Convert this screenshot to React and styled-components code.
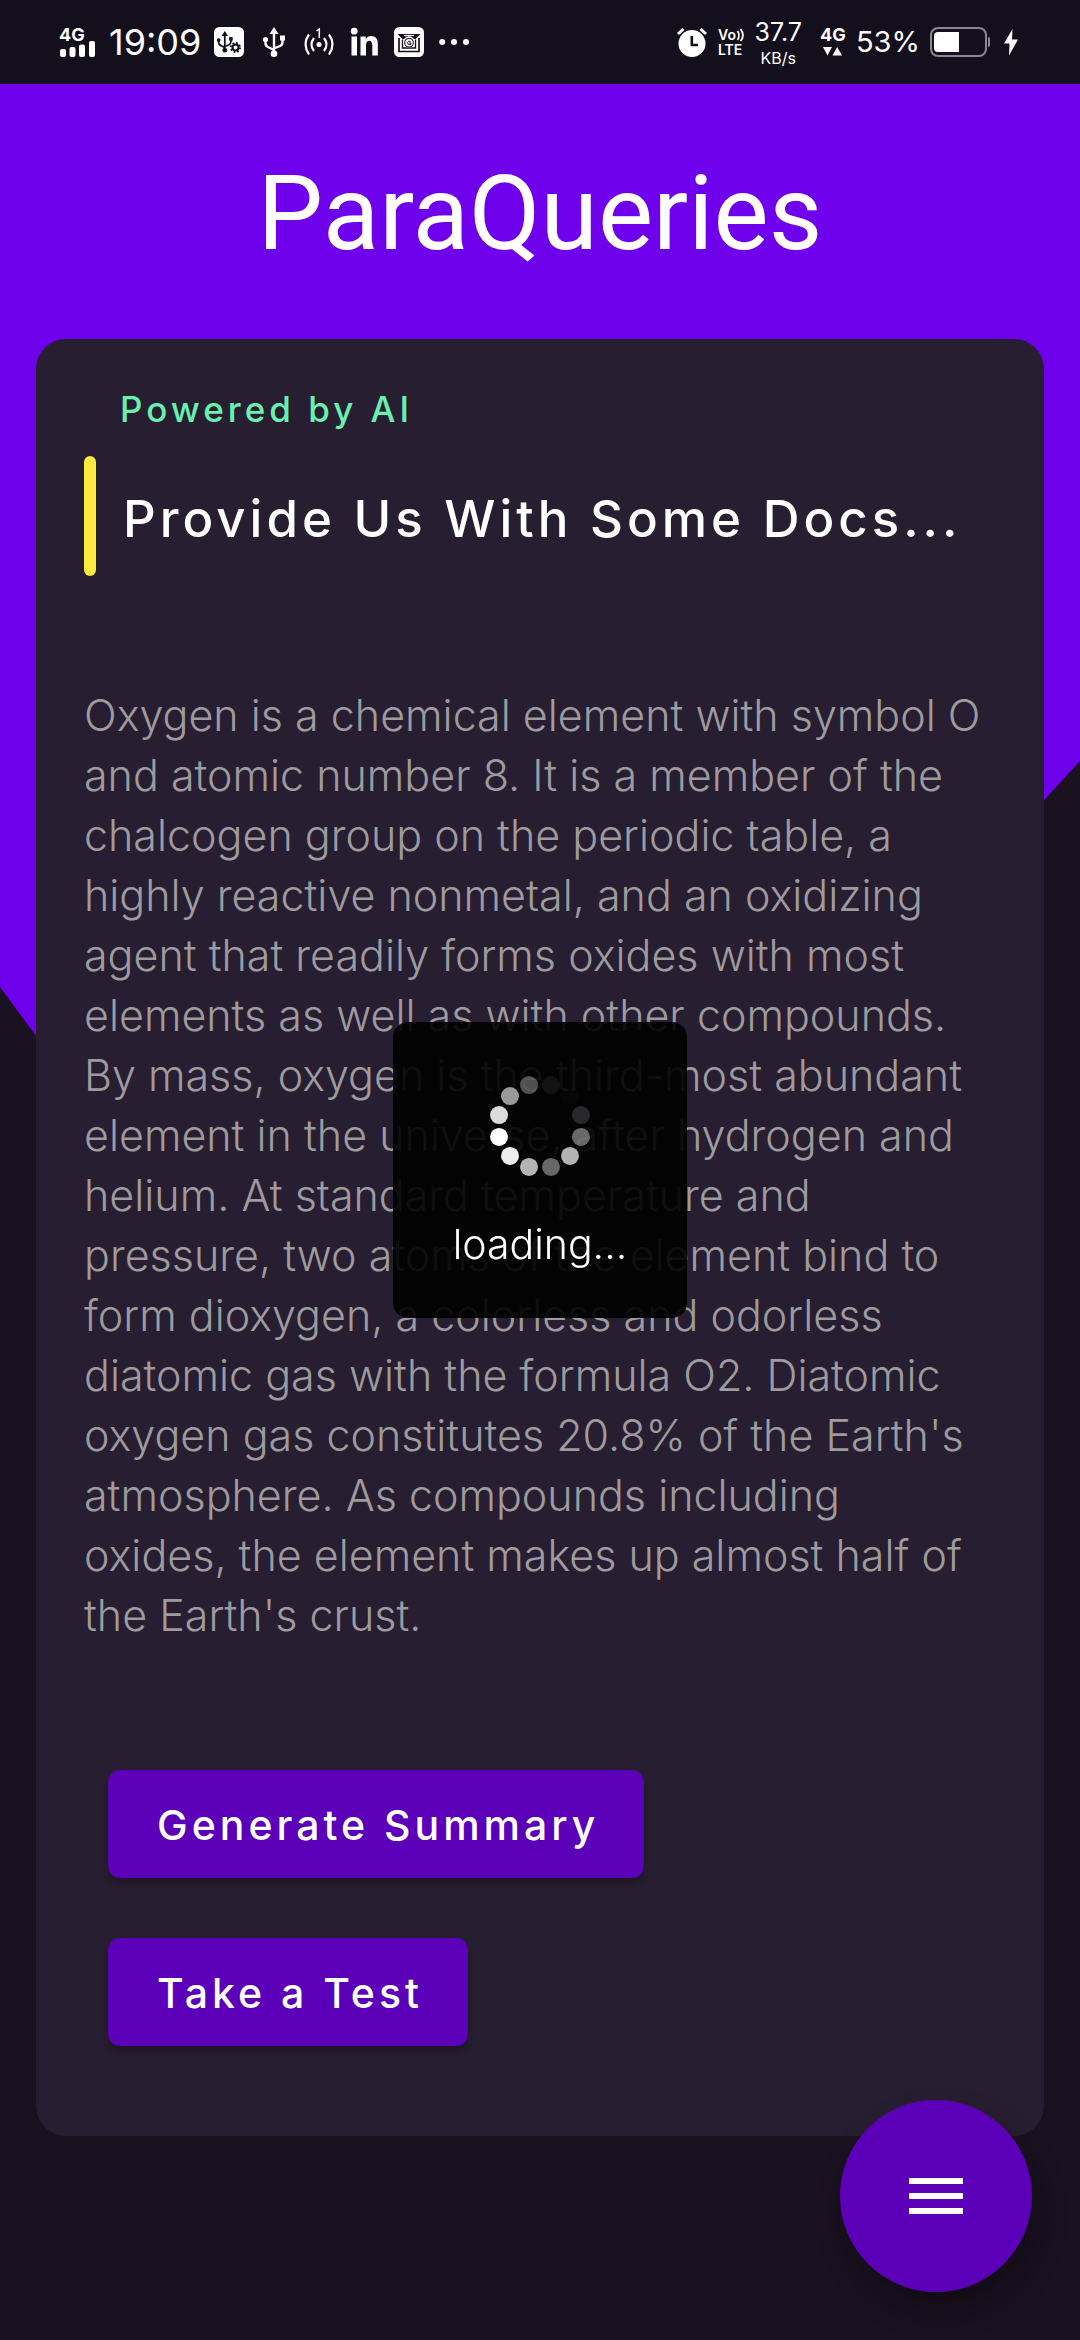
import React from "react";
import styled, { createGlobalStyle } from "styled-components";

const GlobalStyle = createGlobalStyle`
  *, *::before, *::after { box-sizing: border-box; }
  body {
    margin: 0;
    background: #1a1121;
    color: #fff;
    font-family: Inter, "Open Sans", "Liberation Sans", sans-serif;
  }
`;

const Screen = styled.div`
  position: relative;
  isolation: isolate;
  display: flex;
  flex-direction: column;
  min-height: 100vh;
`;

const Backdrop = styled.div`
  position: absolute;
  z-index: -1;
  top: 84px;
  left: 0;
  right: 0;
  height: 1431px;
  background: #6e00eb;
  clip-path: polygon(0 0, 100% 0, 100% 677px, 36% 100%, 0 903px);
`;

const StatusBar = styled.header`
  display: flex;
  justify-content: space-between;
  align-items: center;
  height: 84px;
  padding: 0 60px;
  background: #140f1c;
`;

const StatusGroup = styled.div`
  display: flex;
  align-items: center;
  gap: ${(p) => p.$gap}px;

  svg { display: block; flex: none; overflow: visible; }
`;

const Clock = styled.time`
  font-size: 36px;
  line-height: 40px;
`;

const Speed = styled.div`
  display: flex;
  flex-direction: column;
  align-items: center;
  gap: 4px;
  font-size: 25px;
  line-height: 28px;
  margin-right: 8px;

  small { font-size: 16px; line-height: 16px; }
`;

const Percent = styled.span`
  font-size: 29px;
  line-height: 40px;
`;

const AppTitle = styled.h1`
  margin: 0;
  padding: 70px 0 65px;
  font-family: Roboto, Inter, sans-serif;
  font-size: 104px;
  line-height: 120px;
  font-weight: 400;
  text-align: center;
`;

const Card = styled.main`
  display: flex;
  flex-direction: column;
  margin: 0 36px 204px;
  padding: 48px 48px 90px;
  border-radius: 30px;
  background: #271e31;
`;

const Tagline = styled.p`
  margin: 0;
  padding-left: 36px;
  color: #69f0ae;
  font-size: 35px;
  line-height: 45px;
  font-weight: 500;
  letter-spacing: 4px;
`;

const Heading = styled.label`
  display: flex;
  align-items: flex-start;
  gap: 27px;
  height: 120px;
  margin-top: 24px;
  font-size: 51px;
  line-height: 126px;
  font-weight: 500;
  letter-spacing: 4px;
  white-space: nowrap;

  &::before {
    content: "";
    width: 12px;
    height: 120px;
    border-radius: 6px;
    background: #ffeb3b;
  }
`;

const DocInput = styled.textarea`
  display: block;
  width: 100%;
  height: 960px;
  margin: 109px 0 125px;
  padding: 0 8px 0 0;
  border: 0;
  outline: 0;
  resize: none;
  overflow: hidden;
  background: transparent;
  color: #9e9b9e;
  font: 300 43px/60px Inter, "Open Sans", "Liberation Sans", sans-serif;
`;

const Actions = styled.div`
  display: flex;
  flex-direction: column;
  align-items: flex-start;
  gap: 60px;
  padding-left: 24px;
`;

const ActionButton = styled.button`
  height: 108px;
  padding: 2px 45px 0 49px;
  border: 0;
  border-radius: 12px;
  background: #5b00b8;
  color: #fff;
  box-shadow: 0 4px 6px rgba(0, 0, 0, 0.3);
  font: 500 41px/48px Inter, "Open Sans", "Liberation Sans", sans-serif;
  letter-spacing: 4px;
`;

const MenuButton = styled.button`
  position: fixed;
  right: 48px;
  bottom: 48px;
  display: flex;
  align-items: center;
  justify-content: center;
  width: 192px;
  height: 192px;
  padding: 0;
  border: 0;
  border-radius: 50%;
  background: #5b00b8;
  color: #fff;
  box-shadow: 6px 18px 30px rgba(0, 0, 0, 0.3);
`;

const Loader = styled.div`
  position: fixed;
  top: 50%;
  left: 50%;
  transform: translate(-50%, -50%);
  display: flex;
  flex-direction: column;
  align-items: center;
  gap: 43px;
  width: 294px;
  height: 296px;
  padding-top: 53px;
  border-radius: 15px;
  background: rgba(0, 0, 0, 0.9);
  font-size: 41px;
  line-height: 48px;
  font-weight: 300;
`;

const SignalIcon = () => (
  <svg width="36" height="30" viewBox="0 0 36 30" fill="#fff">
    <text x="-1" y="14" fontSize="18" fontWeight="700">4G</text>
    <rect x="0" y="22" width="6" height="8" rx="2" />
    <rect x="9.500" y="20" width="6" height="10" rx="2" />
    <rect x="19" y="17.500" width="6" height="12.500" rx="2" />
    <rect x="29" y="14" width="6" height="16" rx="2" />
  </svg>
);

const Trident = ({ color }) => (
  <g fill="none" stroke={color} strokeWidth="2.400">
    <path d="M15 4V26" />
    <path d="M6.500 13V16Q6.500 19 9 20L15 23" />
    <path d="M23.500 12V15Q23.500 18 21 19L15 21.500" />
    <path d="M15 0L19.500 7H10.500Z" fill={color} stroke="none" />
    <circle cx="6.500" cy="12.500" r="2.600" fill={color} stroke="none" />
    <rect x="21" y="8.500" width="5" height="5" fill={color} stroke="none" />
    <circle cx="15" cy="26.700" r="3.300" fill={color} stroke="none" />
  </g>
);

const UsbSettingsIcon = () => (
  <svg width="30" height="30" viewBox="0 0 30 30">
    <rect width="30" height="30" rx="5.500" fill="#fff" />
    <g transform="translate(0 4) scale(.72)">
      <Trident color="#140f1c" />
    </g>
    <circle cx="21.500" cy="20.500" r="5.600" fill="#fff" />
    <circle cx="21.500" cy="20.500" r="3" fill="none" stroke="#140f1c" strokeWidth="2" />
    <circle cx="21.500" cy="20.500" r="4.600" fill="none" stroke="#140f1c" strokeWidth="1.800" strokeDasharray="1.800 1.812" />
  </svg>
);

const UsbIcon = () => (
  <svg width="30" height="30" viewBox="0 0 30 30">
    <Trident color="#fff" />
  </svg>
);

const HotspotIcon = () => (
  <svg width="30" height="30" viewBox="0 0 30 30" fill="none" stroke="#fff" strokeWidth="2.200">
    <path d="M5 7.500Q-2 17 5 27.500M10 11Q5 17.500 10 24M25 7.500Q32 17 25 27.500M20 11Q25 17.500 20 24" />
    <circle cx="15" cy="17.500" r="2.500" fill="#fff" stroke="none" />
    <path d="M12.500 4L15.300 2V11" strokeWidth="1.500" />
  </svg>
);

const LinkedInIcon = () => (
  <svg width="30" height="30" viewBox="0 0 30 30" fill="#fff">
    <circle cx="5.200" cy="4.200" r="3.400" />
    <path d="M2.500 9.500H8V28.500H2.500ZM11.500 9.500H16.700V12Q18.500 9 22.300 9Q28.800 9 28.800 17V28.500H23.300V18.500Q23.300 13.700 20.300 13.700Q17 13.700 17 18.500V28.500H11.500Z" />
  </svg>
);

const MailAppIcon = () => (
  <svg width="30" height="30" viewBox="0 0 30 30" fill="none" stroke="#140f1c" strokeWidth="1.700">
    <rect width="30" height="30" rx="5.500" fill="#fff" stroke="none" />
    <path d="M5 11V24.500H25V11" />
    <path d="M3.500 7H26.500L21.500 12H8.500Z" fill="#140f1c" stroke="none" />
    <path d="M8.500 12.500V21H21.500V12.500" strokeWidth="1.400" />
    <circle cx="15" cy="15" r="5.800" fill="#fff" stroke="none" />
    <path d="M10 8.500H20" stroke="#fff" strokeWidth="1.200" />
    <circle cx="15" cy="15.800" r="4.300" strokeWidth="1.100" />
    <path d="M16.600 14.600Q14.500 13.200 13.400 15.500Q13.400 18.300 16.800 17.300V15.900H15.200" strokeWidth="1" />
  </svg>
);

const MoreIcon = () => (
  <svg width="30" height="30" viewBox="0 0 30 30" fill="#fff">
    <circle cx="3.200" cy="15" r="3" />
    <circle cx="15" cy="15" r="3" />
    <circle cx="27" cy="15" r="3" />
  </svg>
);

const AlarmIcon = () => (
  <svg width="30" height="30" viewBox="0 0 30 30">
    <circle cx="15" cy="16.500" r="13.500" fill="#fff" />
    <path d="M1 7L6.500 1.800M29 7L23.500 1.800" stroke="#fff" strokeWidth="3" />
    <path d="M14.800 9V18H21" fill="none" stroke="#140f1c" strokeWidth="2.600" />
  </svg>
);

const VolteIcon = () => (
  <svg width="28" height="30" viewBox="0 0 28 30" fill="#fff">
    <text x="1" y="13" fontSize="14" fontWeight="600">Vo</text>
    <path d="M20.500 4Q23.500 8.500 20.500 13M23.500 2Q28.500 8.500 23.500 14" fill="none" stroke="#fff" strokeWidth="1.800" />
    <text x="1" y="28" fontSize="14" fontWeight="600">LTE</text>
  </svg>
);

const DataIcon = () => (
  <svg width="26" height="30" viewBox="0 0 26 30" fill="#fff">
    <text x="0" y="14" fontSize="18" fontWeight="700">4G</text>
    <path d="M3 20H12L7.500 28.500ZM12.500 28.500H22L17.200 20Z" />
  </svg>
);

const BatteryIcon = () => (
  <svg width="62" height="30" viewBox="0 0 62 30">
    <rect x="1" y="1" width="55" height="28" rx="7" fill="none" stroke="#8a8790" strokeWidth="2" />
    <path d="M58 10Q60 10 60 12V18Q60 20 58 20Z" fill="#8a8790" />
    <path d="M8 5H29V25H8Q4 25 4 21V9Q4 5 8 5Z" fill="#fff" />
  </svg>
);

const BoltIcon = () => (
  <svg width="18" height="30" viewBox="0 0 18 30" fill="#fff">
    <path d="M10.500 2L2 16.500H7.500L7 28.500L16 12.500H10Z" />
  </svg>
);

const MenuIcon = () => (
  <svg width="54" height="36" viewBox="0 0 54 36" fill="#fff">
    <rect width="54" height="6" />
    <rect y="15" width="54" height="6" />
    <rect y="30" width="54" height="6" />
  </svg>
);

const dotOpacities = [0.06, 0.01, 0.15, 0.4, 0.7, 0.4, 0.7, 0.93, 1, 0.86, 0.6, 0.3];

const Spinner = () => (
  <svg width="102" height="102" viewBox="-51 -51 102 102" fill="#fff">
    {dotOpacities.map((opacity, i) => {
      const angle = ((15 + i * 30) * Math.PI) / 180;
      return (
        <circle
          key={i}
          cx={Math.sin(angle) * 42.4}
          cy={-Math.cos(angle) * 42.4}
          r="9"
          fillOpacity={opacity}
        />
      );
    })}
  </svg>
);

const passage =
  "Oxygen is a chemical element with symbol O and atomic number 8. It is a member of the chalcogen group on the periodic table, a highly reactive nonmetal, and an oxidizing agent that readily forms oxides with most elements as well as with other compounds. By mass, oxygen is the third-most abundant element in the universe, after hydrogen and helium. At standard temperature and pressure, two atoms of the element bind to form dioxygen, a colorless and odorless diatomic gas with the formula O2. Diatomic oxygen gas constitutes 20.8% of the Earth's atmosphere. As compounds including oxides, the element makes up almost half of the Earth's crust.";

export default function App() {
  return (
    <>
      <GlobalStyle />
      <Screen>
        <Backdrop />
        <StatusBar>
          <StatusGroup $gap={13}>
            <SignalIcon />
            <Clock>19:09</Clock>
            <StatusGroup $gap={15}>
              <UsbSettingsIcon />
              <UsbIcon />
              <HotspotIcon />
              <LinkedInIcon />
              <MailAppIcon />
              <MoreIcon />
            </StatusGroup>
          </StatusGroup>
          <StatusGroup $gap={10}>
            <AlarmIcon />
            <VolteIcon />
            <Speed>
              37.7
              <small>KB/s</small>
            </Speed>
            <DataIcon />
            <Percent>53%</Percent>
            <BatteryIcon />
            <BoltIcon />
          </StatusGroup>
        </StatusBar>
        <AppTitle>ParaQueries</AppTitle>
        <Card>
          <Tagline>Powered by AI</Tagline>
          <Heading htmlFor="docs">Provide Us With Some Docs...</Heading>
          <DocInput id="docs" spellCheck={false} defaultValue={passage} />
          <Actions>
            <ActionButton type="button">Generate Summary</ActionButton>
            <ActionButton type="button">Take a Test</ActionButton>
          </Actions>
        </Card>
        <MenuButton type="button" aria-label="Menu">
          <MenuIcon />
        </MenuButton>
        <Loader role="status">
          <Spinner />
          loading...
        </Loader>
      </Screen>
    </>
  );
}
